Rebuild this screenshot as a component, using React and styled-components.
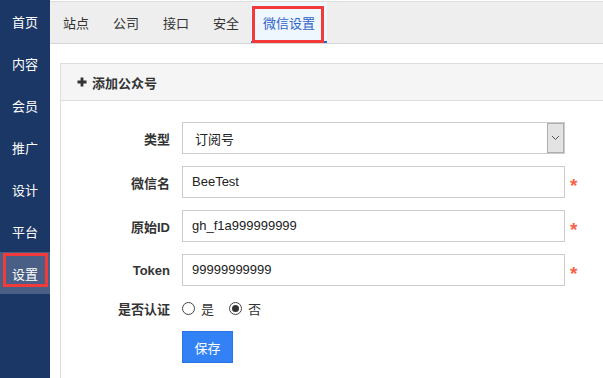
import React from "react";
import styled, { createGlobalStyle, css } from "styled-components";

const GlobalStyle = createGlobalStyle`
  html, body {
    margin: 0;
    padding: 0;
    background: #fff;
  }
  body {
    font-family: "Liberation Sans", "Noto Sans CJK SC", sans-serif;
    font-size: 13px;
    color: #333;
  }
`;

const Shell = styled.div`
  display: grid;
  grid-template-columns: 50px 1fr;
  height: 100vh;
  overflow: hidden;
`;

const Sidebar = styled.nav`
  background: #1b3765;
  display: flex;
  flex-direction: column;
`;

const NavItem = styled.div`
  position: relative;
  height: 42px;
  display: flex;
  align-items: center;
  justify-content: center;
  color: #fff;
  font-size: 13px;
  ${(p) =>
    p.$active &&
    css`
      background: #4a5f86;
      &::after {
        content: "";
        position: absolute;
        left: 3px;
        right: 2px;
        top: 1px;
        bottom: 7px;
        border: 3px solid #f23a3a;
      }
    `}
`;

const Main = styled.div`
  display: flex;
  flex-direction: column;
  min-width: 0;
`;

const TabBar = styled.div`
  display: flex;
  height: 41px;
  margin-top: 1px;
  padding-left: 1px;
  background: #eeeeee;
  border-top: 1px solid #dcdcdc;
  border-bottom: 1px solid #d6d6d6;
`;

const Tab = styled.div`
  position: relative;
  display: flex;
  align-items: center;
  padding: 0 12px;
  font-size: 13px;
  color: #333;
  ${(p) =>
    p.$active &&
    css`
      color: #2f64c8;
      background: #eef6fe;
      box-shadow: inset 0 -2px 0 #2f64c8;
      &::after {
        content: "";
        position: absolute;
        left: 1px;
        right: 3px;
        top: 4px;
        bottom: 0;
        border: 3px solid #f23a3a;
      }
    `}
`;

const Content = styled.div`
  flex: 1;
  padding: 19px 0 0 10px;
  overflow: hidden;
`;

const Panel = styled.section`
  width: 600px;
  height: 400px;
  border: 1px solid #dddddd;
`;

const PanelHeader = styled.header`
  display: flex;
  align-items: center;
  gap: 5px;
  height: 36px;
  padding-left: 16px;
  background: #f5f5f5;
  border-bottom: 1px solid #dddddd;
  font-weight: bold;
  font-size: 13px;
  color: #333;
`;

const Form = styled.div`
  display: grid;
  grid-template-columns: 109px 383px 20px;
  column-gap: 12px;
  row-gap: 12px;
  padding-top: 21px;
`;

const Label = styled.label`
  display: flex;
  align-items: center;
  justify-content: flex-end;
  font-weight: bold;
  font-size: 13px;
  color: #333;
`;

const Field = styled.div`
  box-sizing: border-box;
  height: 32px;
  display: flex;
  align-items: center;
  border: 1px solid #cccccc;
  background: #fff;
  padding-left: ${(p) => (p.$select ? "12px" : "9px")};
  padding-bottom: ${(p) => (p.$select ? "0" : "2px")};
  font-size: 13px;
  color: #222;
`;

const FieldText = styled.span`
  flex: 1;
`;

const ArrowBox = styled.span`
  box-sizing: border-box;
  width: 17px;
  height: 30px;
  display: flex;
  align-items: center;
  justify-content: center;
  background: #e3e3e3;
  border: 1px solid #adadad;
`;

const Required = styled.span`
  display: flex;
  align-items: center;
  margin-left: -7px;
  padding-top: 7px;
  color: #f4664a;
  font-size: 19px;
  font-weight: bold;
  line-height: 1;
`;

const RadioGroup = styled.div`
  height: 21px;
  display: flex;
  align-items: center;
`;

const RadioOption = styled.span`
  display: flex;
  align-items: center;
  gap: 6px;
  margin-right: 15px;
  color: #333;
`;

const RadioCircle = styled.span`
  box-sizing: border-box;
  width: 13px;
  height: 13px;
  border-radius: 50%;
  border: 1.3px solid #444;
  display: flex;
  align-items: center;
  justify-content: center;
  &::after {
    content: "";
    width: 7px;
    height: 7px;
    border-radius: 50%;
    background: ${(p) => (p.$checked ? "#333" : "transparent")};
  }
`;

const SaveButton = styled.button`
  width: 51px;
  height: 32px;
  border: 1px solid #2a74e6;
  background: #3282f6;
  color: #fff;
  font-family: inherit;
  font-size: 13px;
  padding: 0;
`;

const Plus = () => (
  <svg width="10" height="10" viewBox="0 0 10 10">
    <path d="M5 0.5v9M0.5 5h9" stroke="#333" strokeWidth="2.8" />
  </svg>
);

const Chevron = () => (
  <svg width="9" height="6" viewBox="0 0 9 6">
    <path d="M1 1l3.5 3.5L8 1" fill="none" stroke="#555" strokeWidth="1" />
  </svg>
);

const navItems = ["首页", "内容", "会员", "推广", "设计", "平台", "设置"];
const tabs = ["站点", "公司", "接口", "安全", "微信设置"];

const inputs = [
  { label: "微信名", value: "BeeTest" },
  { label: "原始ID", value: "gh_f1a999999999" },
  { label: "Token", value: "99999999999" },
];

export default function App() {
  return (
    <>
      <GlobalStyle />
      <Shell>
        <Sidebar>
          {navItems.map((n, i) => (
            <NavItem key={i} $active={i === navItems.length - 1}>
              {n}
            </NavItem>
          ))}
        </Sidebar>
        <Main>
          <TabBar>
            {tabs.map((t) => (
              <Tab key={t} $active={t === "微信设置"}>
                {t}
              </Tab>
            ))}
          </TabBar>
          <Content>
            <Panel>
              <PanelHeader>
                <Plus />
                添加公众号
              </PanelHeader>
              <Form>
                <Label>类型</Label>
                <Field $select>
                  <FieldText>订阅号</FieldText>
                  <ArrowBox>
                    <Chevron />
                  </ArrowBox>
                </Field>
                <span />
                {inputs.map((f) => (
                  <React.Fragment key={f.label}>
                    <Label>{f.label}</Label>
                    <Field>
                      <FieldText>{f.value}</FieldText>
                    </Field>
                    <Required>*</Required>
                  </React.Fragment>
                ))}
                <Label>是否认证</Label>
                <RadioGroup>
                  <RadioOption>
                    <RadioCircle />是
                  </RadioOption>
                  <RadioOption>
                    <RadioCircle $checked />否
                  </RadioOption>
                </RadioGroup>
                <span />
                <span />
                <div>
                  <SaveButton>保存</SaveButton>
                </div>
                <span />
              </Form>
            </Panel>
          </Content>
        </Main>
      </Shell>
    </>
  );
}
